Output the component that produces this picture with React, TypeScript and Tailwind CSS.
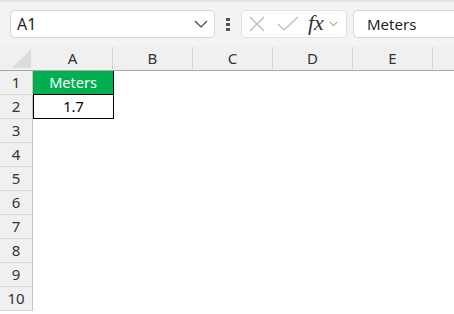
import React from "react";

const cols = ["A", "B", "C", "D", "E", ""];
const rows = [1, 2, 3, 4, 5, 6, 7, 8, 9, 10];

export default function App() {
  return (
    <div
      className="w-[454px] h-[314px] overflow-hidden bg-white relative"
      style={{ fontFamily: '"Noto Sans", "Open Sans", sans-serif' }}
    >
      {/* Formula bar */}
      <div className="h-[46px] bg-[#f3f3f3] border-t-2 border-[#e4e4e4] flex items-start pt-[8px] pl-[10px]">
        <div className="w-[205px] shrink-0 h-[28px] bg-white border border-[#d6d6d6] rounded-[5px] flex items-center justify-between pl-[6px] pr-[6px]">
          <span className="text-[16px] text-[#1f1f1f] leading-none">A1</span>
          <svg width="14" height="8" viewBox="0 0 14 8">
            <path d="M1 1 L7 7 L13 1" fill="none" stroke="#444" strokeWidth="1.2" />
          </svg>
        </div>
        <div className="w-[26px] shrink-0 h-[28px] flex flex-col items-center justify-center gap-[2px]">
          <div className="w-[4px] h-[3px] bg-[#555]" />
          <div className="w-[4px] h-[3px] bg-[#555]" />
          <div className="w-[4px] h-[3px] bg-[#555]" />
        </div>
        <div className="w-[106px] shrink-0 h-[28px] bg-white border border-[#e0e0e0] rounded-[5px] flex items-center pl-[7px]">
          <svg width="16" height="16" viewBox="0 0 16 16">
            <path d="M1 1 L15 15 M15 1 L1 15" fill="none" stroke="#b8b8b8" strokeWidth="1.2" />
          </svg>
          <svg width="22" height="16" viewBox="0 0 22 16" className="ml-[12px]">
            <path d="M1 8 L7 14 L21 1" fill="none" stroke="#b8b8b8" strokeWidth="1.2" />
          </svg>
          <span
            className="ml-[9px] text-[22px] italic leading-none text-[#333] -mt-[3px]"
            style={{ fontFamily: '"Liberation Serif", serif' }}
          >
            fx
          </span>
          <svg width="9" height="6" viewBox="0 0 9 6" className="ml-[5px]">
            <path d="M1 1 L4.5 5 L8 1" fill="none" stroke="#888" strokeWidth="1" />
          </svg>
        </div>
        <div className="ml-[6px] flex-1 h-[28px] bg-white border border-[#d6d6d6] border-r-0 rounded-l-[5px] flex items-center pl-[13px]">
          <span className="text-[15px] text-[#1f1f1f] leading-none">Meters</span>
        </div>
      </div>

      {/* Column header */}
      <div className="h-[25px] bg-[#f0f0f0] border-b border-[#a8a8a8] flex">
        <div className="w-[33px] shrink-0 h-full relative">
          <svg width="33" height="24" viewBox="0 0 33 24" className="absolute left-0 top-0">
            <path d="M12 22 L31 22 L31 3 Z" fill="#dcdcdc" />
          </svg>
        </div>
        {cols.map((c, i) => (
          <div key={i} className="w-[80px] shrink-0 h-full flex items-end pb-[1px]">
            <div className="flex-1 h-full flex items-center justify-center text-[15px] text-[#333] pt-[1px]">
              {c}
            </div>
            <div className="w-px h-[22px] bg-[#d4d4d4]" />
          </div>
        ))}
      </div>

      {/* Rows */}
      {rows.map((r) => (
        <div key={r} className="h-[24px] flex">
          <div className="w-[33px] shrink-0 h-full bg-[#f0f0f0] border-r border-b border-r-[#c4c4c4] border-b-[#d8d8d8] flex items-center justify-center text-[15px] text-[#333]">
            {r}
          </div>
          {r === 1 && (
            <div className="w-[81px] shrink-0 h-full bg-[#00b050] border-r border-b border-black flex items-center justify-center text-[14.5px] text-white">
              Meters
            </div>
          )}
          {r === 2 && (
            <div className="w-[81px] shrink-0 h-full bg-white border-l border-r border-b border-black flex items-center justify-center text-[14.5px] text-black">
              1.7
            </div>
          )}
        </div>
      ))}
    </div>
  );
}
